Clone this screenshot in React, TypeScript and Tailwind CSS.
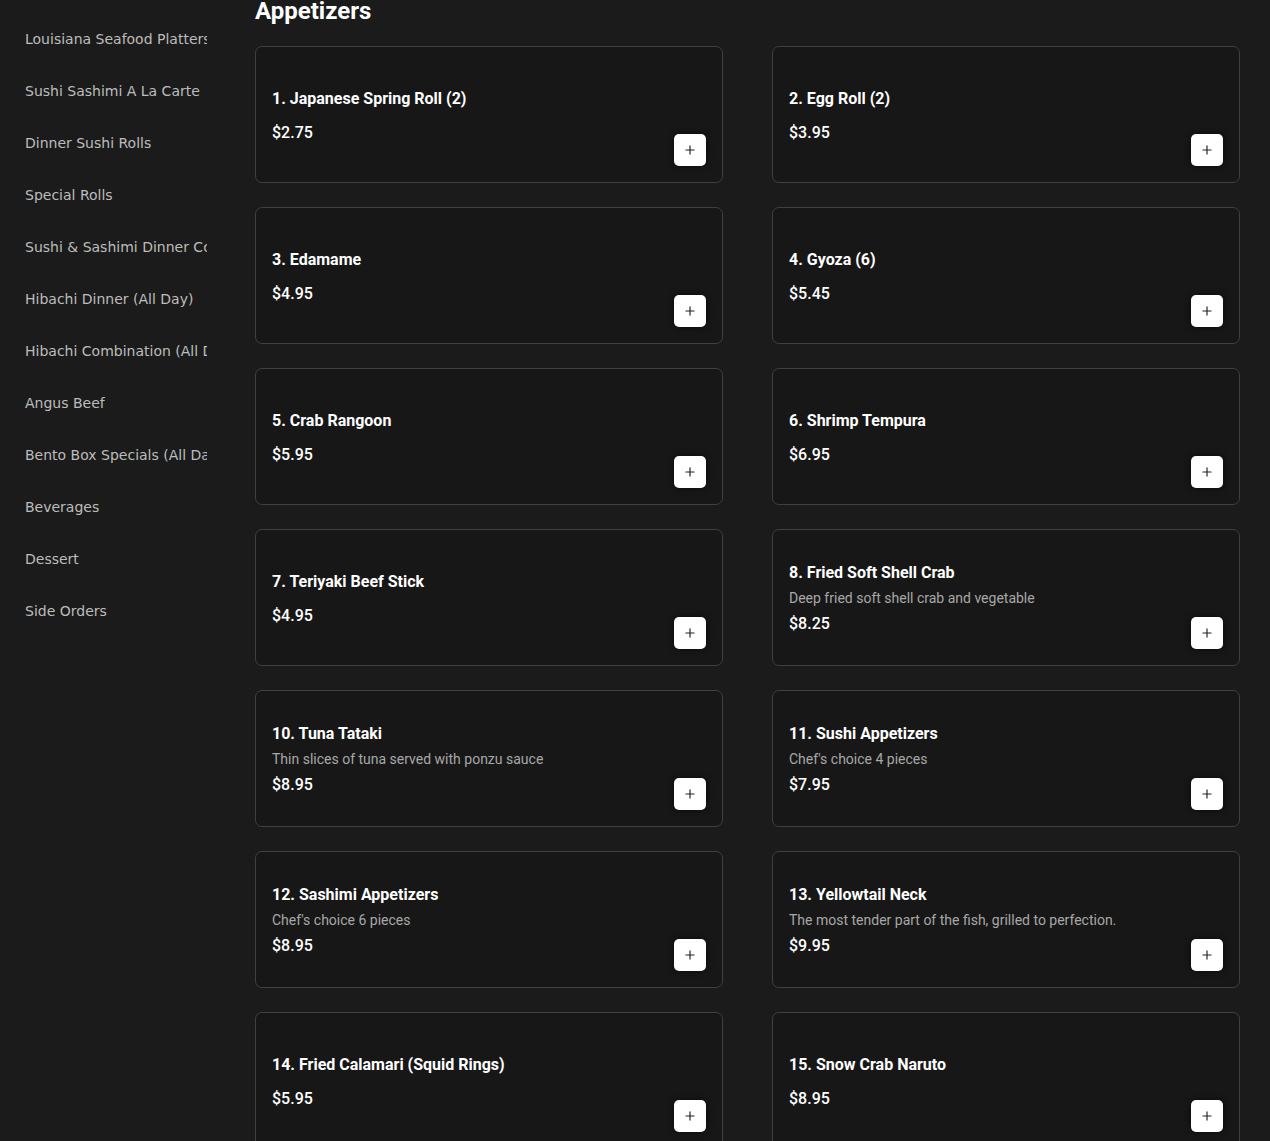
import React from 'react';
import { Plus } from 'lucide-react';

const categories = [
  'Louisiana Seafood Platters',
  'Sushi Sashimi A La Carte',
  'Dinner Sushi Rolls',
  'Special Rolls',
  'Sushi & Sashimi Dinner Combo',
  'Hibachi Dinner (All Day)',
  'Hibachi Combination (All Day)',
  'Angus Beef',
  'Bento Box Specials (All Day)',
  'Beverages',
  'Dessert',
  'Side Orders',
];

interface Item {
  name: string;
  price: string;
  desc?: string;
}

const items: Item[] = [
  { name: '1. Japanese Spring Roll (2)', price: '$2.75' },
  { name: '2. Egg Roll (2)', price: '$3.95' },
  { name: '3. Edamame', price: '$4.95' },
  { name: '4. Gyoza (6)', price: '$5.45' },
  { name: '5. Crab Rangoon', price: '$5.95' },
  { name: '6. Shrimp Tempura', price: '$6.95' },
  { name: '7. Teriyaki Beef Stick', price: '$4.95' },
  { name: '8. Fried Soft Shell Crab', price: '$8.25', desc: 'Deep fried soft shell crab and vegetable' },
  { name: '10. Tuna Tataki', price: '$8.95', desc: 'Thin slices of tuna served with ponzu sauce' },
  { name: '11. Sushi Appetizers', price: '$7.95', desc: "Chef's choice 4 pieces" },
  { name: '12. Sashimi Appetizers', price: '$8.95', desc: "Chef's choice 6 pieces" },
  { name: '13. Yellowtail Neck', price: '$9.95', desc: 'The most tender part of the fish, grilled to perfection.' },
  { name: '14. Fried Calamari (Squid Rings)', price: '$5.95' },
  { name: '15. Snow Crab Naruto', price: '$8.95' },
];

function MenuCard({ item }: { item: Item }) {
  return (
    <div className="h-[137px] flex rounded-[7px] border border-[#404040] bg-[#171717] px-4">
      <div className="flex-1 flex flex-col justify-center pt-[2px]">
        <div className="text-base leading-6 font-bold text-white">{item.name}</div>
        {item.desc && (
          <div className="mt-[3px] text-sm leading-5 text-[#a8a8a8]">{item.desc}</div>
        )}
        <div className={`${item.desc ? 'mt-1' : 'mt-[10px]'} text-base leading-6 font-medium text-white`}>
          {item.price}
        </div>
      </div>
      <div className="flex items-end pb-4">
        <button className="w-8 h-8 rounded-[5px] bg-white flex items-center justify-center shadow-[0_0_6px_rgba(0,0,0,0.6)]">
          <Plus className="w-3.5 h-3.5 text-[#222]" strokeWidth={2} />
        </button>
      </div>
    </div>
  );
}

export default function App() {
  return (
    <div className="h-[1141px] overflow-hidden bg-[#1b1b1b] flex">
      <aside className="w-[255px] shrink-0 pt-[13px] font-['DejaVu_Sans',sans-serif]">
        {categories.map((c) => (
          <div key={c} className="w-[207px] pl-[25px] py-4 text-sm leading-5 text-[#bdbdbd] whitespace-nowrap overflow-hidden">
            {c}
          </div>
        ))}
      </aside>

      <main className="flex-1 pr-[30px] font-['Roboto',sans-serif]">
        <h2 className="mt-[-5px] mb-[19px] text-2xl leading-8 font-bold text-white">Appetizers</h2>
        <div className="grid grid-cols-2 gap-x-[49px] gap-y-[24px]">
          {items.map((item) => (
            <MenuCard key={item.name} item={item} />
          ))}
        </div>
      </main>
    </div>
  );
}
